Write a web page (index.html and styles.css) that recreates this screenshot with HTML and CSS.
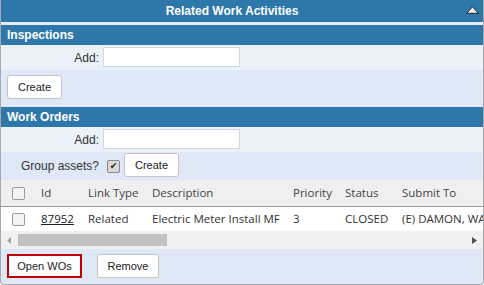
FILE: index.html
```html
<!DOCTYPE html>
<html>
<head>
<meta charset="utf-8">
<link rel="stylesheet" href="styles.css">
</head>
<body>
<div class="panel">
  <div class="title">
    <span class="title-text">Related Work Activities</span>
    <span class="collapse"><svg class="collapse-icon" width="13" height="8" viewBox="0 0 13 8"><path d="M0.7 7.3 L6.5 0.8 L12.3 7.3 Z" fill="#f2f2f2" stroke="#222" stroke-width="1"/></svg></span>
  </div>
  <div class="section-head first">Inspections</div>
  <div class="add-row">
    <label class="lbl">Add:</label>
    <input class="txt" type="text">
  </div>
  <div class="btn-row insp">
    <button class="btn create">Create</button>
  </div>
  <div class="section-head">Work Orders</div>
  <div class="add-row">
    <label class="lbl">Add:</label>
    <input class="txt" type="text">
  </div>
  <div class="group-row">
    <span class="lbl">Group assets?</span>
    <span class="chk checked">✔</span>
    <button class="btn create">Create</button>
  </div>
  <div class="grid-wrap">
    <table class="grid">
      <colgroup>
        <col class="c-sel"><col class="c-id"><col class="c-lt"><col class="c-desc"><col class="c-pri"><col class="c-st"><col class="c-sub">
      </colgroup>
      <thead>
        <tr><th><span class="chk"></span></th><th>Id</th><th>Link Type</th><th>Description</th><th>Priority</th><th>Status</th><th>Submit To</th></tr>
      </thead>
      <tbody>
        <tr><td><span class="chk"></span></td><td><a class="wo" href="#">87952</a></td><td>Related</td><td>Electric Meter Install MF</td><td>3</td><td>CLOSED</td><td>(E) DAMON, WALTER</td></tr>
      </tbody>
    </table>
  </div>
  <div class="hscroll">
    <span class="arrow left"><svg width="5" height="7" viewBox="0 0 5 7"><path d="M4 0 L0 3.5 L4 7 Z" fill="#a3a3a3"/></svg></span>
    <span class="thumb"></span>
    <span class="track"></span>
    <span class="arrow right"><svg width="5" height="7" viewBox="0 0 5 7"><path d="M0 0 L5 3.5 L0 7 Z" fill="#505050"/></svg></span>
  </div>
  <div class="btn-row foot">
    <button class="btn open">Open WOs</button>
    <button class="btn remove">Remove</button>
  </div>
</div>
</body>
</html>
```
FILE: styles.css
```css
html, body {
  margin: 0;
  padding: 0;
  background: #ffffff;
}
.panel {
  width: 484px;
  height: 285px;
  box-sizing: border-box;
  border: 1px solid #a9a9a9;
  border-top: 0;
  border-radius: 0 0 4px 4px;
  background: #dfe8f6;
  font-family: "Liberation Sans", Arial, sans-serif;
  font-size: 12px;
  color: #333;
  overflow: hidden;
}
.title {
  height: 22px;
  background: #2e77ab;
  display: flex;
  align-items: center;
  color: #fff;
  font-weight: bold;
  font-size: 12px;
}
.title-text {
  flex: 1;
  text-align: center;
}
.collapse {
  flex: 0 0 20px;
  display: flex;
  align-items: center;
  padding-left: 3px;
  box-sizing: border-box;
  margin-top: -2px;
}
.collapse-icon { flex: none; display: block; }
.section-head {
  height: 20px;
  line-height: 20px;
  background: #2e77ab;
  color: #fff;
  font-weight: bold;
  font-size: 12px;
  padding-left: 6px;
}
.section-head.first {
  margin-top: 3px;
  box-shadow: 0 -3px 0 #e6edf6;
}
.add-row {
  height: 25px;
  background: #eaf1f9;
  display: flex;
  align-items: center;
}
.lbl {
  width: 98px;
  text-align: right;
  font-size: 12px;
  color: #333;
}
.txt {
  margin: 0 0 0 4px;
  width: 137px;
  height: 20px;
  box-sizing: border-box;
  border: 1px solid #d3d8df;
  background: #fff;
  padding: 0 3px;
  outline: none;
}
.add-row .txt { margin-top: -1px; }
.btn {
  font-family: "Liberation Sans", Arial, sans-serif;
  font-size: 11px;
  color: #222;
  background: #fff;
  border: 1px solid #c4c4c4;
  border-radius: 3px;
  height: 24px;
  box-sizing: border-box;
  padding: 0;
  margin: 0;
}
.btn-row {
  display: flex;
  gap: 15px;
}
.btn-row.insp {
  height: 37px;
  padding: 5px 0 0 6px;
  box-sizing: border-box;
}
.create { width: 55px; }
.group-row {
  height: 28px;
  display: flex;
  align-items: center;
}
.group-row .chk { margin-left: 8px; margin-right: 4px; }
.group-row .btn { margin-top: -2px; }
.chk {
  display: inline-block;
  width: 11px;
  height: 11px;
  border: 1px solid #9a9a9a;
  border-radius: 2px;
  background: #f4f4f4;
  vertical-align: middle;
  font-size: 10px;
  line-height: 11px;
  text-align: center;
  color: #222;
}
.chk.checked {
  background: #d9d9d9;
  border-color: #8a8a8a;
  font-family: "DejaVu Sans", sans-serif;
  font-size: 9px;
}
.grid-wrap {
  overflow: hidden;
  background: #fff;
}
.grid {
  table-layout: fixed;
  border-collapse: collapse;
  width: 560px;
  font-family: "Open Sans", "Noto Sans", sans-serif;
  font-size: 11.5px;
  color: #333;
}
.c-sel { width: 40px; }
.c-id { width: 47px; }
.c-lt { width: 64px; }
.c-desc { width: 141px; }
.c-pri { width: 52px; }
.c-st { width: 57px; }
.c-sub { width: 159px; }
.grid th, .grid td {
  text-align: left;
  font-weight: normal;
  padding: 0;
  white-space: nowrap;
  overflow: hidden;
}
.grid th:first-child, .grid td:first-child { padding-left: 11px; }
.grid thead tr {
  height: 26px;
  background: #efefef;
  border-bottom: 1px solid #9c9c9c;
  color: #444;
}
.grid tbody tr {
  height: 25px;
  background: #fff;
}
.wo { color: #222; text-decoration: underline; }
.hscroll {
  height: 18px;
  background: #f0f0f0;
  display: flex;
  align-items: center;
}
.arrow {
  width: 17px;
  display: flex;
  justify-content: center;
  align-items: center;
}
.thumb {
  width: 149px;
  height: 12px;
  background: #c1c1c1;
}
.track { flex: 1; }
.btn-row.foot {
  height: 34px;
  padding: 5px 0 0 6px;
  box-sizing: border-box;
}
.open {
  width: 75px;
  border: 2px solid #c00000;
  border-radius: 0;
}
.remove { width: 62px; }
```
